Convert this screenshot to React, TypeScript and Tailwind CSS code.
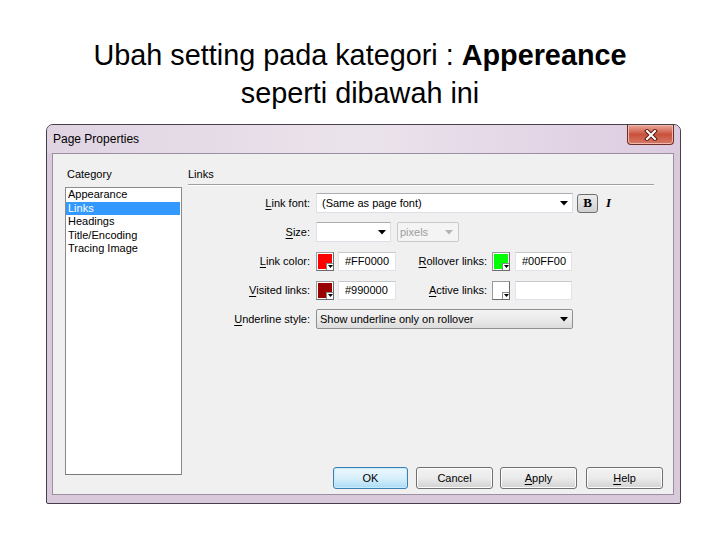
import React from "react"

const Arrow = ({ color = "#000" }: { color?: string }) => (
  <svg width="8" height="5" viewBox="0 0 8 5">
    <path d="M0 0h8L4 4.5z" fill={color} />
  </svg>
)

const Key = ({ children }: { children: React.ReactNode }) => (
  <span className="underline underline-offset-[2px]">{children}</span>
)

function Swatch({ color }: { color: string }) {
  return (
    <div className="relative w-[18px] h-[19px] border border-[#9a9a9a] border-r-[#6b6b6b] border-b-[#6b6b6b] bg-white p-[1px]">
      <div className="w-full h-full" style={{ background: color }} />
      <div className="absolute right-0 bottom-0 w-[7px] h-[7px] bg-white border-l border-t border-[#8a8a8a] flex items-center justify-center">
        <svg width="5" height="3" viewBox="0 0 5 3">
          <path d="M0 0h5L2.5 3z" fill="#000" />
        </svg>
      </div>
    </div>
  )
}

function TextBox({ value, w }: { value: string; w: string }) {
  return (
    <div className={`${w} h-[19px] bg-white border border-[#e2e3ea] border-t-[#c6c8ce] flex items-center pl-[6px] text-black`}>
      {value}
    </div>
  )
}

function Btn({ children, primary, w }: { children: React.ReactNode; primary?: boolean; w: string }) {
  return (
    <div
      className={`${w} h-[22px] rounded-[3px] border flex items-center justify-center text-black ${
        primary
          ? "border-[#3c7fb1] bg-gradient-to-b from-[#eaf6fd] via-[#d9f0fc] to-[#a9dbf6] shadow-[inset_0_0_0_1px_#c8ebfb]"
          : "border-[#707070] bg-gradient-to-b from-[#f2f2f2] via-[#ebebeb] to-[#d2d2d2] shadow-[inset_0_0_0_1px_#fcfcfc]"
      }`}
    >
      {children}
    </div>
  )
}

const categories = ["Appearance", "Links", "Headings", "Title/Encoding", "Tracing Image"]

export default function App() {
  return (
    <div className="w-[720px] h-[540px] bg-white overflow-hidden font-['Liberation_Sans',Arial,sans-serif]">
      <div className="pt-[36px] text-center text-[28.8px] leading-[38px] text-black">
        <p>
          Ubah setting pada kategori : <b>Appereance</b>
        </p>
        <p>seperti dibawah ini</p>
      </div>

      {/* dialog window */}
      <div className="ml-[46px] mt-[12px] w-[635px] h-[380px] border border-[#45404a] rounded-t-[7px] rounded-b-[2px] bg-[#d8c9db] flex flex-col overflow-hidden">
        <div className="h-[28px] shrink-0 flex items-start justify-between bg-gradient-to-r from-[#e0d4e2] via-[#ebe3ec] to-[#dccbe0]">
          <span className="pl-[6px] h-[28px] flex items-center text-[12px] text-black">Page Properties</span>
          <div className="mr-[6px] w-[47px] h-[20px] rounded-b-[4px] border border-t-0 border-[#6f2d27] bg-gradient-to-b from-[#e9a899] via-[#c8503d] to-[#d77a64] flex items-center justify-center shadow-[inset_0_0_0_1px_#efb8ab]">
            <svg width="14" height="12" viewBox="0 0 14 12">
              <path d="M3 2l8 8M11 2l-8 8" stroke="#5a1d16" strokeWidth="4" strokeLinecap="square" />
              <path d="M3 2l8 8M11 2l-8 8" stroke="#fff" strokeWidth="2" strokeLinecap="square" />
            </svg>
          </div>
        </div>

        <div className="flex-1 min-h-0 flex pl-[5px] pr-[6px] pb-[8px]">
          <div className="flex-1 bg-[#f0f0f0] border border-[#9d8fa2] flex pl-[12px] pt-[13px] pb-[5px] text-[11px] text-black">
            {/* category column */}
            <div className="w-[117px] flex flex-col">
              <div className="h-[14px] leading-[14px] pl-[2px]">Category</div>
              <div className="mt-[6px] h-[288px] bg-white border border-[#8a8a8a] border-b-[#7a7a7a] pr-[1px]">
                {categories.map((c) => (
                  <div
                    key={c}
                    className={`h-[13.5px] leading-[13.5px] pl-[2px] ${c === "Links" ? "bg-[#3399ff] text-white" : ""}`}
                  >
                    {c}
                  </div>
                ))}
              </div>
            </div>

            {/* links panel */}
            <div className="ml-[6px] flex-1 flex flex-col pr-[10px]">
              <div className="h-[14px] leading-[14px]">Links</div>
              <div className="mt-[3px] mr-[9px] h-[2px] border-t border-[#a0a0a0] border-b border-b-white" />
              <div className="mt-[7px] flex flex-col gap-[9px]">
                <div className="h-[20px] flex items-center">
                  <div className="w-[122px] text-right">
                    <Key>L</Key>ink font:
                  </div>
                  <div className="ml-[6px] w-[257px] h-[20px] bg-white border border-[#dcdfe5] border-t-[#abadb3] flex items-center justify-between pl-[5px] pr-[4px]">
                    <span>(Same as page font)</span>
                    <Arrow />
                  </div>
                  <div className="ml-[4px] w-[21px] h-[19px] rounded-[3px] border border-[#6e6e6e] bg-gradient-to-b from-[#ededed] to-[#cfcfcf] flex items-center justify-center font-['Liberation_Serif',serif] font-bold text-[13px]">
                    B
                  </div>
                  <div className="ml-[8px] font-['Liberation_Serif',serif] font-bold italic text-[13px]">I</div>
                </div>

                <div className="h-[20px] flex items-center">
                  <div className="w-[122px] text-right">
                    <Key>S</Key>ize:
                  </div>
                  <div className="ml-[6px] w-[75px] h-[20px] bg-white border border-[#dcdfe5] border-t-[#abadb3] flex items-center justify-end pr-[4px]">
                    <Arrow />
                  </div>
                  <div className="ml-[6px] w-[62px] h-[20px] bg-[#f4f4f4] border border-[#c9c9c9] rounded-[2px] flex items-center justify-between pl-[2px] pr-[5px] text-[#9d9d9d]">
                    <span>pixels</span>
                    <Arrow color="#b4b4b4" />
                  </div>
                </div>

                <div className="h-[20px] flex items-center">
                  <div className="w-[122px] text-right">
                    <Key>L</Key>ink color:
                  </div>
                  <div className="ml-[6px]">
                    <Swatch color="#ff0000" />
                  </div>
                  <div className="ml-[4px]">
                    <TextBox value="#FF0000" w="w-[58px]" />
                  </div>
                  <div className="w-[91px] text-right">
                    <Key>R</Key>ollover links:
                  </div>
                  <div className="ml-[5px]">
                    <Swatch color="#00ff00" />
                  </div>
                  <div className="ml-[5px]">
                    <TextBox value="#00FF00" w="w-[57px]" />
                  </div>
                </div>

                <div className="h-[20px] flex items-center">
                  <div className="w-[122px] text-right">
                    <Key>V</Key>isited links:
                  </div>
                  <div className="ml-[6px]">
                    <Swatch color="#990000" />
                  </div>
                  <div className="ml-[4px]">
                    <TextBox value="#990000" w="w-[58px]" />
                  </div>
                  <div className="w-[91px] text-right">
                    <Key>A</Key>ctive links:
                  </div>
                  <div className="ml-[5px]">
                    <Swatch color="#ffffff" />
                  </div>
                  <div className="ml-[5px]">
                    <TextBox value="" w="w-[57px]" />
                  </div>
                </div>

                <div className="h-[20px] flex items-center">
                  <div className="w-[122px] text-right">
                    <Key>U</Key>nderline style:
                  </div>
                  <div className="ml-[6px] w-[257px] h-[20px] rounded-[2px] border border-[#8e8f8f] bg-gradient-to-b from-[#f3f3f3] via-[#ebebeb] to-[#dcdcdc] flex items-center justify-between pl-[3px] pr-[4px]">
                    <span>Show underline only on rollover</span>
                    <Arrow />
                  </div>
                </div>
              </div>

              <div className="mt-auto flex justify-end">
                <Btn primary w="w-[75px]">OK</Btn>
                <div className="ml-[8px]">
                  <Btn w="w-[77px]">Cancel</Btn>
                </div>
                <div className="ml-[7px]">
                  <Btn w="w-[77px]">
                    <span>
                      <Key>A</Key>pply
                    </span>
                  </Btn>
                </div>
                <div className="ml-[9px]">
                  <Btn w="w-[77px]">
                    <span>
                      <Key>H</Key>elp
                    </span>
                  </Btn>
                </div>
              </div>
            </div>
          </div>
        </div>
      </div>
    </div>
  )
}
